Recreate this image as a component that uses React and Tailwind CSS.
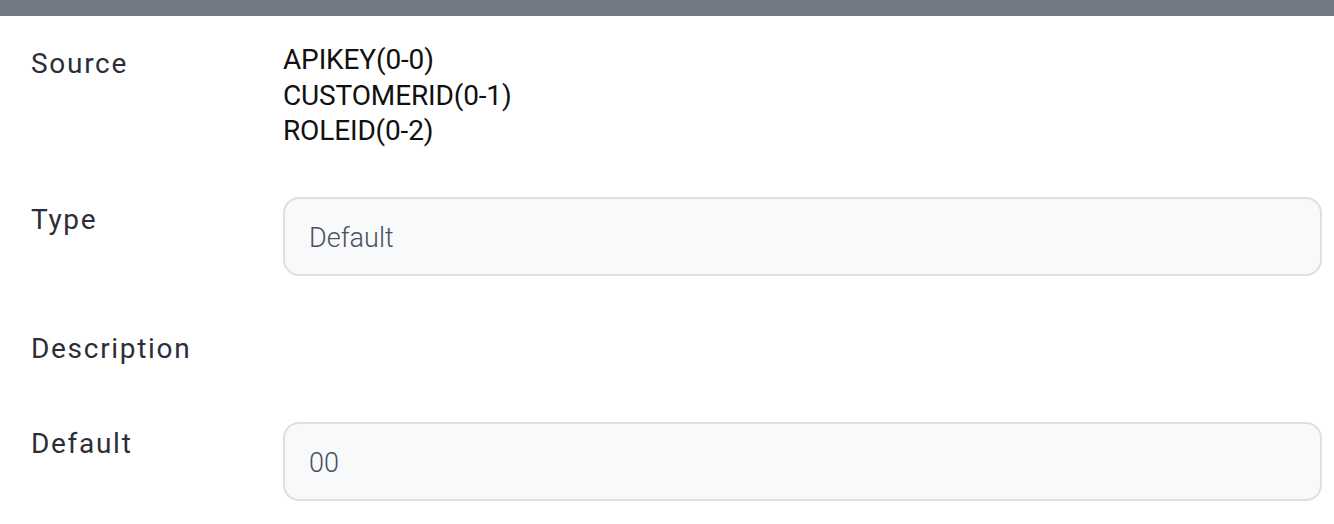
import React from 'react';

const font = { fontFamily: 'Roboto, "Noto Sans", sans-serif' };

function Label({ children, className = '' }) {
  return (
    <div className={`w-[252px] shrink-0 text-[28px] leading-[32px] tracking-[1.7px] text-[#2a2f3a] ${className}`}>
      {children}
    </div>
  );
}

function Field({ value }) {
  return (
    <div className="flex-1 h-[79px] rounded-[16px] border-2 border-[#dcdfe3] bg-[#f8f9fb] px-[24px] pt-[4px] flex items-center text-[27px] font-light text-[#4a505c]">
      {value}
    </div>
  );
}

export default function App() {
  return (
    <div className="w-[1334px] h-[524px] bg-white overflow-hidden" style={font}>
      <div className="h-[16px] bg-[#747a84]" />
      <div className="flex flex-col pl-[31px] pr-[12px]">
        <div className="flex items-start">
          <Label className="mt-[32px]">Source</Label>
          <div className="mt-[26px] text-[28px] leading-[35.5px] text-[#111] tracking-[-0.15px]">
            <div>APIKEY(0-0)</div>
            <div>CUSTOMERID(0-1)</div>
            <div>ROLEID(0-2)</div>
          </div>
        </div>

        <div className="flex items-start mt-[48px]">
          <Label className="mt-[7px]">Type</Label>
          <Field value="Default" />
        </div>

        <div className="flex items-start mt-[57px]">
          <Label>Description</Label>
        </div>

        <div className="flex items-start mt-[57px]">
          <Label className="mt-[6px]">Default</Label>
          <Field value="00" />
        </div>
      </div>
    </div>
  );
}
